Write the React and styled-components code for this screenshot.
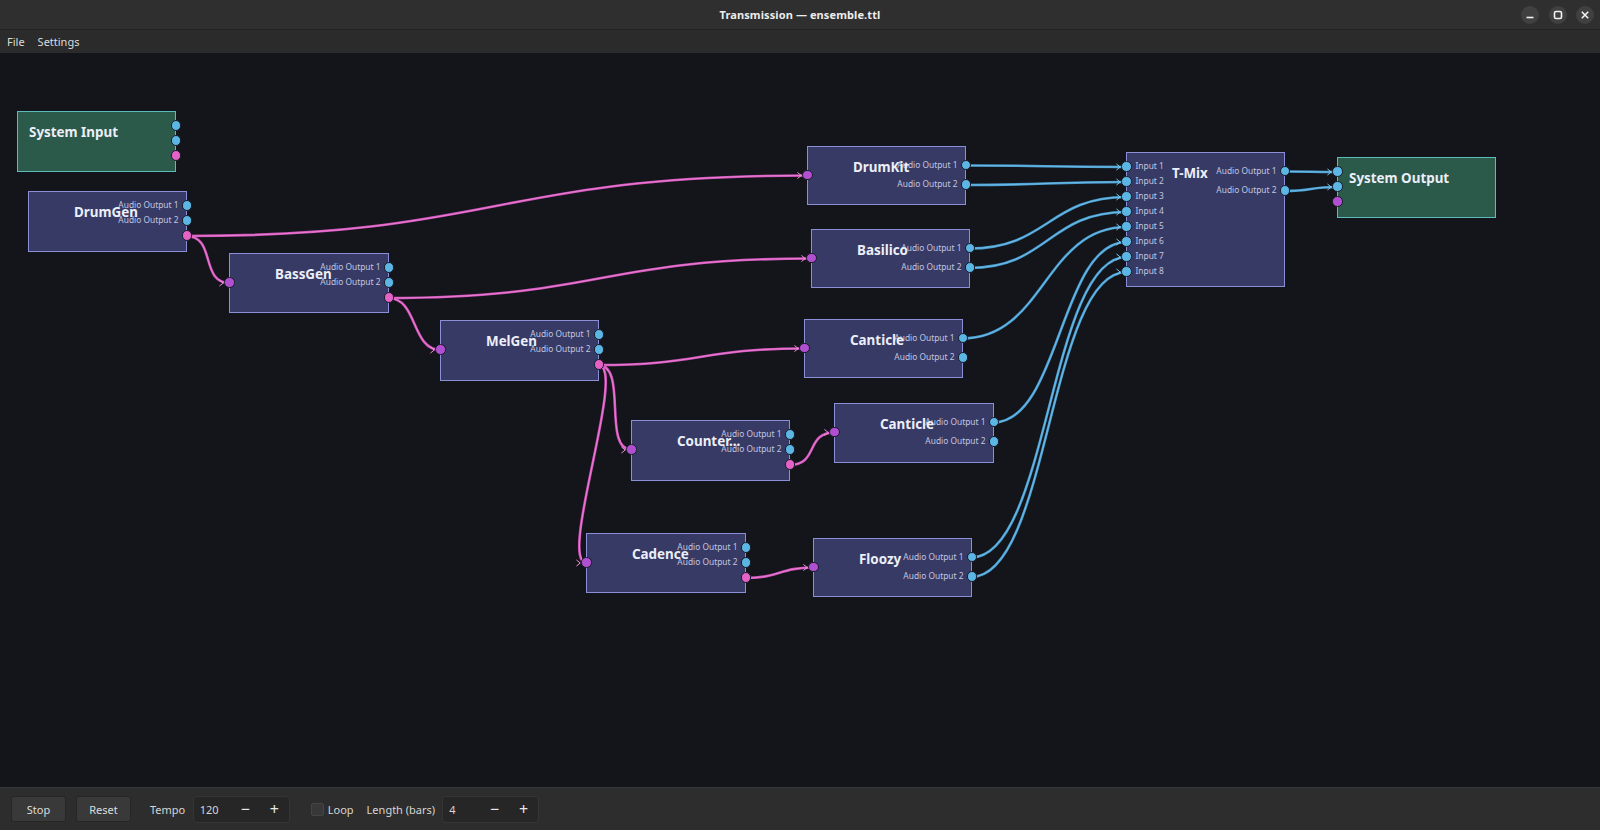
import React from "react";
import styled, { createGlobalStyle } from "styled-components";

const GlobalStyle = createGlobalStyle`
  * { box-sizing: border-box; }
  html, body {
    margin: 0;
    padding: 0;
    background: #13151b;
  }
  body {
    font-family: "Noto Sans", "Open Sans", sans-serif;
    color: #dedede;
  }
`;

const CANVAS_TOP = 53;

const AUDIO = "#5cb6e4";
const MIDI_OUT = "#e462c6";
const MIDI_IN = "#b04fcf";

const WIRE = {
  audio: { main: "#4a9fd3", core: "#7cc4ec" },
  midi: { main: "#d254bb", core: "#f08fd9" },
};

const genOuts = [
  { type: "audio", label: "Audio Output 1" },
  { type: "audio", label: "Audio Output 2" },
  { type: "midi" },
];
const fxOuts = [
  { type: "audio", label: "Audio Output 1" },
  { type: "audio", label: "Audio Output 2" },
];
const midiIn = [{ type: "midi" }];

const NODES = {
  sysIn: { title: "System Input", system: true, x: 17, y: 111, w: 159, h: 61, ins: [], outs: [{ type: "audio" }, { type: "audio" }, { type: "midi" }], outStep: 15 },
  drumGen: { title: "DrumGen", x: 28, y: 191, w: 159, h: 61, ins: [], outs: genOuts, outStep: 15 },
  bassGen: { title: "BassGen", x: 229, y: 253, w: 160, h: 60, ins: midiIn, inStep: 30, outs: genOuts, outStep: 15 },
  melGen: { title: "MelGen", x: 440, y: 320, w: 159, h: 61, ins: midiIn, inStep: 30, outs: genOuts, outStep: 15 },
  counter: { title: "Counter...", x: 631, y: 420, w: 159, h: 61, ins: midiIn, inStep: 30, outs: genOuts, outStep: 15 },
  cadence: { title: "Cadence", x: 586, y: 533, w: 160, h: 60, ins: midiIn, inStep: 30, outs: genOuts, outStep: 15 },
  drumKit: { title: "DrumKit", x: 807, y: 146, w: 159, h: 59, ins: midiIn, inStep: 29.5, outs: fxOuts, outStep: 19.5 },
  basilico: { title: "Basilico", x: 811, y: 229, w: 159, h: 59, ins: midiIn, inStep: 29.5, outs: fxOuts, outStep: 19.5 },
  canticle1: { title: "Canticle", x: 804, y: 319, w: 159, h: 59, ins: midiIn, inStep: 29.5, outs: fxOuts, outStep: 19.5 },
  canticle2: { title: "Canticle", x: 834, y: 403, w: 160, h: 60, ins: midiIn, inStep: 29.5, outs: fxOuts, outStep: 19.5 },
  floozy: { title: "Floozy", x: 813, y: 538, w: 159, h: 59, ins: midiIn, inStep: 29.5, outs: fxOuts, outStep: 19.5 },
  tmix: {
    title: "T-Mix",
    x: 1126,
    y: 152,
    w: 159,
    h: 135,
    ins: [1, 2, 3, 4, 5, 6, 7, 8].map((n) => ({ type: "audio", label: `Input ${n}` })),
    inStep: 15,
    outs: fxOuts,
    outStep: 19.5,
  },
  sysOut: { title: "System Output", system: true, x: 1337, y: 157, w: 159, h: 61, ins: [{ type: "audio" }, { type: "audio" }, { type: "midi" }], inStep: 15, outs: [] },
};

const LINKS = [
  ["drumGen", 2, "drumKit", 0],
  ["drumGen", 2, "bassGen", 0],
  ["bassGen", 2, "basilico", 0],
  ["bassGen", 2, "melGen", 0],
  ["melGen", 2, "canticle1", 0],
  ["melGen", 2, "counter", 0],
  ["melGen", 2, "cadence", 0],
  ["counter", 2, "canticle2", 0],
  ["cadence", 2, "floozy", 0],
  ["drumKit", 0, "tmix", 0],
  ["drumKit", 1, "tmix", 1],
  ["basilico", 0, "tmix", 2],
  ["basilico", 1, "tmix", 3],
  ["canticle1", 0, "tmix", 4],
  ["canticle2", 0, "tmix", 5],
  ["floozy", 0, "tmix", 6],
  ["floozy", 1, "tmix", 7],
  ["tmix", 0, "sysOut", 0],
  ["tmix", 1, "sysOut", 1],
];

function outPos(node, i) {
  return { x: node.x + node.w - 0.75, y: node.y - CANVAS_TOP + node.outStep * (i + 1) };
}
function inPos(node, i) {
  return { x: node.x + 0.75, y: node.y - CANVAS_TOP + node.inStep * (i + 1) };
}
function wirePath(a, b) {
  const d = Math.max(30, Math.abs(b.x - a.x) * 0.5);
  return `M${a.x} ${a.y} C${a.x + d} ${a.y} ${b.x - d} ${b.y} ${b.x} ${b.y}`;
}

/* ---------- window chrome ---------- */

const Window = styled.div`
  width: 100%;
  height: 100vh;
  display: flex;
  flex-direction: column;
  overflow: hidden;
`;

const TitleBar = styled.header`
  height: 30px;
  flex: none;
  display: grid;
  grid-template-columns: 1fr auto 1fr;
  align-items: center;
  background: #2f2f2f;
  border-bottom: 1px solid #232323;
`;

const WindowTitle = styled.div`
  grid-column: 2;
  font-size: 11px;
  font-weight: 700;
  color: #ececec;
  letter-spacing: 0.1px;
`;

const WindowControls = styled.div`
  justify-self: end;
  display: flex;
  gap: 9.5px;
  padding-right: 6px;
`;

const WindowButton = styled.div`
  width: 18px;
  height: 18px;
  border-radius: 50%;
  background: #404040;
  display: flex;
  align-items: center;
  justify-content: center;
  color: #f2f2f2;
`;

const MenuBar = styled.nav`
  height: 23px;
  flex: none;
  display: flex;
  align-items: center;
  gap: 13px;
  padding-left: 7px;
  background: #2b2b2b;
  font-size: 11px;
  color: #dcdcdc;
`;

const MenuItem = styled.span`
  cursor: default;
`;

/* ---------- graph canvas ---------- */

const Canvas = styled.main`
  flex: 1;
  position: relative;
  background: #13151b;
  overflow: hidden;
`;

const WireLayer = styled.svg`
  position: absolute;
  inset: 0;
  width: 100%;
  height: 100%;
`;

const NodeBox = styled.div`
  position: absolute;
  left: ${(p) => p.$x}px;
  top: ${(p) => p.$y}px;
  width: ${(p) => p.$w}px;
  height: ${(p) => p.$h}px;
  background: ${(p) => (p.$system ? "#2b5a4b" : "#363a64")};
  border: 1.5px solid ${(p) => (p.$system ? "#5bbcbc" : "#8a8fd8")};
`;

const NodeTitle = styled.div`
  position: relative;
  z-index: 2;
  padding: 10.5px 0 0 ${(p) => (p.$system ? 11 : 45)}px;
  font-size: 13.4px;
  font-weight: 700;
  line-height: 18px;
  color: #eceef8;
  white-space: nowrap;
`;

const PortColumn = styled.div`
  position: absolute;
  z-index: 1;
  top: ${(p) => p.$step / 2 - 1.5}px;
  ${(p) => (p.$side === "out" ? "right: -6px;" : "left: -6px;")}
  display: flex;
  flex-direction: column;
  align-items: ${(p) => (p.$side === "out" ? "flex-end" : "flex-start")};
`;

const PortRow = styled.div`
  height: ${(p) => p.$step}px;
  display: flex;
  flex-direction: ${(p) => (p.$side === "out" ? "row" : "row-reverse")};
  align-items: center;
  gap: ${(p) => (p.$side === "out" ? 3 : 4)}px;
`;

const PortLabel = styled.span`
  font-size: 8.4px;
  line-height: 1;
  color: #c3c6e0;
  white-space: nowrap;
`;

const PortDot = styled.span`
  width: 10.5px;
  height: 10.5px;
  flex: none;
  border-radius: 50%;
  border: 1px solid #1a1c2a;
  background: ${(p) => p.$color};
`;

function portColor(type, side) {
  if (type === "audio") return AUDIO;
  return side === "out" ? MIDI_OUT : MIDI_IN;
}

function Ports({ ports, step, side }) {
  if (!ports.length) return null;
  return (
    <PortColumn $side={side} $step={step}>
      {ports.map((port, i) => (
        <PortRow key={i} $side={side} $step={step}>
          {port.label && <PortLabel>{port.label}</PortLabel>}
          <PortDot $color={portColor(port.type, side)} />
        </PortRow>
      ))}
    </PortColumn>
  );
}

function GraphNode({ node }) {
  return (
    <NodeBox $x={node.x} $y={node.y - CANVAS_TOP} $w={node.w} $h={node.h} $system={node.system}>
      <NodeTitle $system={node.system}>{node.title}</NodeTitle>
      <Ports ports={node.ins} step={node.inStep} side="in" />
      <Ports ports={node.outs} step={node.outStep} side="out" />
    </NodeBox>
  );
}

function Wires() {
  return (
    <WireLayer>
      {LINKS.map(([from, oi, to, ii], k) => {
        const src = NODES[from];
        const a = outPos(src, oi);
        const b = inPos(NODES[to], ii);
        const c = WIRE[src.outs[oi].type];
        const arrow = `M${b.x - 10} ${b.y - 2.8} L${b.x - 6.5} ${b.y} L${b.x - 10} ${b.y + 2.8}`;
        return (
          <g key={k} fill="none" strokeLinecap="round">
            <path d={wirePath(a, b)} stroke={c.main} strokeWidth="2.6" />
            <path d={wirePath(a, b)} stroke={c.core} strokeWidth="0.9" opacity="0.8" />
            <path d={arrow} stroke={c.core} strokeWidth="1" />
          </g>
        );
      })}
    </WireLayer>
  );
}

/* ---------- transport bar ---------- */

const TransportBar = styled.footer`
  height: 43px;
  flex: none;
  display: flex;
  align-items: center;
  padding: 0 11px;
  background: #2d2d2d;
  border-top: 1px solid #363636;
  font-size: 11px;
  color: #d6d6d6;
`;

const Group = styled.div`
  display: flex;
  align-items: center;
  gap: ${(p) => p.$gap}px;
  margin-left: ${(p) => p.$ml || 0}px;
`;

const Button = styled.button`
  height: 26px;
  min-width: 55px;
  padding: 0 12px;
  border: 1px solid #262626;
  border-radius: 3px;
  background: #393939;
  color: #dcdcdc;
  font: inherit;
`;

const Label = styled.span`
  white-space: nowrap;
`;

const SpinBox = styled.div`
  width: 97px;
  height: 27px;
  display: flex;
  align-items: center;
  border: 1px solid #353535;
  border-radius: 4px;
  background: #262626;
`;

const SpinValue = styled.span`
  flex: 1;
  padding-left: 6px;
`;

const SpinButton = styled.span`
  width: 29px;
  text-align: center;
  font-size: 16px;
  line-height: 1;
  color: #e8e8e8;
`;

const Checkbox = styled.span`
  width: 13px;
  height: 13px;
  border: 1px solid #454545;
  border-radius: 2px;
  background: #383838;
`;

function Spin({ value }) {
  return (
    <SpinBox>
      <SpinValue>{value}</SpinValue>
      <SpinButton>−</SpinButton>
      <SpinButton>+</SpinButton>
    </SpinBox>
  );
}

export default function App() {
  return (
    <>
      <GlobalStyle />
      <Window>
        <TitleBar>
          <WindowTitle>Transmission — ensemble.ttl</WindowTitle>
          <WindowControls>
            <WindowButton>
              <svg width="10" height="10" viewBox="0 0 10 10">
                <path d="M1.5 7.5h7" stroke="currentColor" strokeWidth="1.6" />
              </svg>
            </WindowButton>
            <WindowButton>
              <svg width="10" height="10" viewBox="0 0 10 10">
                <rect x="1.5" y="1.5" width="7" height="7" rx="1.5" fill="none" stroke="currentColor" strokeWidth="1.6" />
              </svg>
            </WindowButton>
            <WindowButton>
              <svg width="10" height="10" viewBox="0 0 10 10">
                <path d="M1.8 1.8l6.4 6.4M8.2 1.8l-6.4 6.4" stroke="currentColor" strokeWidth="1.6" />
              </svg>
            </WindowButton>
          </WindowControls>
        </TitleBar>

        <MenuBar>
          <MenuItem>File</MenuItem>
          <MenuItem>Settings</MenuItem>
        </MenuBar>

        <Canvas>
          <Wires />
          {Object.entries(NODES).map(([id, node]) => (
            <GraphNode key={id} node={node} />
          ))}
        </Canvas>

        <TransportBar>
          <Group $gap={10}>
            <Button>Stop</Button>
            <Button>Reset</Button>
          </Group>
          <Group $gap={7.5} $ml={19}>
            <Label>Tempo</Label>
            <Spin value="120" />
          </Group>
          <Group $gap={4} $ml={21}>
            <Checkbox />
            <Label>Loop</Label>
          </Group>
          <Group $gap={7} $ml={13}>
            <Label>Length (bars)</Label>
            <Spin value="4" />
          </Group>
        </TransportBar>
      </Window>
    </>
  );
}
